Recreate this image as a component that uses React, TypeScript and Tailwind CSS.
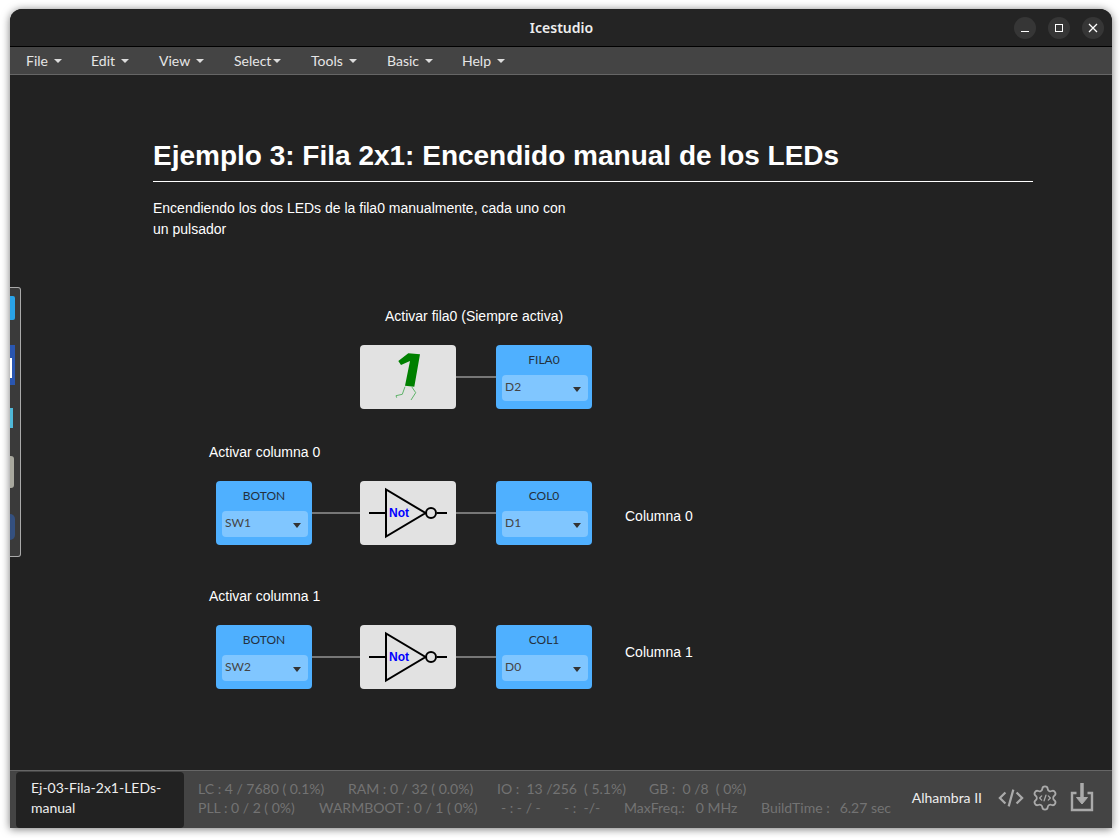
import React from "react";

const menus = [
  { label: "File", w: "w-[65px]", gap: "ml-[6px]" },
  { label: "Edit", w: "w-[68px]", gap: "ml-[6px]" },
  { label: "View", w: "w-[75px]", gap: "ml-[6px]" },
  { label: "Select", w: "w-[77px]", gap: "ml-[2px]" },
  { label: "Tools", w: "w-[76px]", gap: "ml-[6px]" },
  { label: "Basic", w: "w-[75px]", gap: "ml-[6px]" },
  { label: "Help", w: "w-[70px]", gap: "ml-[6px]" },
];

function Caret() {
  return <span className="inline-block h-0 w-0 border-x-[4px] border-t-[4px] border-x-transparent border-t-[#ddd]" />;
}

function PinBlock({ pos, name, pin }: { pos: string; name: string; pin: string }) {
  return (
    <div className={`absolute ${pos} flex h-[64px] w-[96px] flex-col rounded-[4px] bg-[#4fb0ff] pl-[6px] pr-[4px] pt-[6px] font-['Lato',sans-serif]`}>
      <div className="h-[18px] pr-[2px] text-center text-[12px] leading-[18px] text-[#24303d]">{name}</div>
      <div className="mt-[6px] flex h-[26px] items-center justify-between rounded-[4px] bg-[#80c6ff] pl-[3px] pr-[7px] text-[12px] text-[#444]">
        <span className="-mt-[3px]">{pin}</span>
        <span className="mt-[3px] h-0 w-0 border-x-[4px] border-t-[5px] border-x-transparent border-t-[#333]" />
      </div>
    </div>
  );
}

function NotGate({ pos }: { pos: string }) {
  return (
    <div className={`absolute ${pos} h-[64px] w-[96px] rounded-[4px] bg-[#e2e2e2]`}>
      <svg width="96" height="64" viewBox="0 0 96 64">
        <path d="M9 32H26M77 32H87" stroke="#000" strokeWidth="2" fill="none" />
        <path d="M26 8.5V55.5L65.5 32Z" stroke="#000" strokeWidth="2" fill="none" />
        <circle cx="71" cy="32" r="5" stroke="#000" strokeWidth="2" fill="none" />
      </svg>
      <span className="absolute left-[29px] top-[24px] font-['Liberation_Sans',sans-serif] text-[12px] font-bold leading-[16px] text-[#0000ff]">
        Not
      </span>
    </div>
  );
}

function ConstBlock({ pos }: { pos: string }) {
  return (
    <div className={`absolute ${pos} h-[64px] w-[96px] rounded-[4px] bg-[#e2e2e2]`}>
      <svg width="96" height="64" viewBox="0 0 96 64">
        <path d="M48.3 8.3L60 9.3L54.3 41.7L45 40.7L50 16L41 20L38.3 16Z" fill="#008000" />
        <path d="M45 41.7L42.3 49.3L36 50.7L36.7 52.7M51.7 41.7L55.7 47.7L51 55" stroke="#5fb36a" strokeWidth="1" fill="none" />
      </svg>
    </div>
  );
}

function Wire({ pos }: { pos: string }) {
  return <div className={`absolute ${pos} h-[2px] bg-[#777]`} />;
}

function Label({ pos, children }: { pos: string; children: React.ReactNode }) {
  return <div className={`absolute ${pos} text-[14px] leading-[20px] text-white`}>{children}</div>;
}

function GearCode() {
  return (
    <svg width="28" height="28" viewBox="0 0 24 24" fill="none" stroke="#aaa" strokeWidth="1.5" strokeLinejoin="round" strokeLinecap="round">
      <path d="M9.67 4.14a2.34 2.34 0 0 1 4.66 0 2.34 2.34 0 0 0 3.32 1.92 2.34 2.34 0 0 1 2.33 4.03 2.34 2.34 0 0 0 0 3.82 2.34 2.34 0 0 1-2.33 4.03 2.34 2.34 0 0 0-3.32 1.92 2.34 2.34 0 0 1-4.66 0 2.34 2.34 0 0 0-3.32-1.92 2.34 2.34 0 0 1-2.33-4.03 2.34 2.34 0 0 0 0-3.82 2.34 2.34 0 0 1 2.33-4.03 2.34 2.34 0 0 0 3.32-1.92Z" />
      <path d="M9.2 10.2L7.4 12l1.8 1.8M14.8 10.2l1.8 1.8-1.8 1.8M12.8 9.6l-1.6 4.8" strokeWidth="1.1" />
    </svg>
  );
}

export default function App() {
  return (
    <div className="h-[838px] w-[1120px] overflow-hidden bg-white pl-[10px] pt-[9px] font-['Lato',sans-serif]">
      <div className="relative flex h-[819px] w-[1102px] flex-col overflow-hidden rounded-t-[12px] bg-[#222] shadow-[0_1px_8px_rgba(0,0,0,0.55)]">
        {/* title bar */}
        <div className="relative flex h-[38px] shrink-0 items-center justify-center border-b border-black bg-[#242424]">
          <span className="ml-[1px] font-['Noto_Sans',sans-serif] text-[14px] font-semibold text-[#eee]">Icestudio</span>
          <div className="absolute right-[8px] top-[8px] flex gap-[12px]">
            <button className="flex h-[22px] w-[22px] items-center justify-center rounded-full bg-[#363636]">
              <span className="mt-[7px] h-[1px] w-[8px] bg-white" />
            </button>
            <button className="flex h-[22px] w-[22px] items-center justify-center rounded-full bg-[#363636]">
              <span className="h-[8px] w-[8px] border border-white" />
            </button>
            <button className="flex h-[22px] w-[22px] items-center justify-center rounded-full bg-[#363636]">
              <svg width="10" height="10" viewBox="0 0 10 10">
                <path d="M1 1L9 9M9 1L1 9" stroke="#fff" strokeWidth="1.3" />
              </svg>
            </button>
          </div>
        </div>

        {/* menu bar */}
        <div className="flex h-[28px] shrink-0 items-center border-b border-[#666] bg-[#444] pl-[1px] text-[14px] text-[#e6e6e6]">
          {menus.map((m) => (
            <div key={m.label} className={`flex ${m.w} items-center pl-[15px]`}>
              <span>{m.label}</span>
              <span className={`${m.gap} mt-[1px] flex`}>
                <Caret />
              </span>
            </div>
          ))}
        </div>

        {/* canvas */}
        <div className="relative flex-1 font-['Liberation_Sans',sans-serif]">
          <div className="ml-[143px] w-[880px] pt-[63px]">
            <h1 className="border-b border-white pb-[7px] text-[28px] font-bold leading-[36px] text-white">
              Ejemplo 3: Fila 2x1: Encendido manual de los LEDs
            </h1>
            <p className="mt-[16px] w-[430px] text-[14px] leading-[21px] text-white">
              Encendiendo los dos LEDs de la fila0 manualmente, cada uno con un pulsador
            </p>
          </div>

          <Label pos="left-[375px] top-[231px]">Activar fila0 (Siempre activa)</Label>
          <Label pos="left-[199px] top-[367px]">Activar columna 0</Label>
          <Label pos="left-[615px] top-[431px]">Columna 0</Label>
          <Label pos="left-[199px] top-[511px]">Activar columna 1</Label>
          <Label pos="left-[615px] top-[567px]">Columna 1</Label>

          <Wire pos="left-[446px] top-[301px] w-[40px]" />
          <Wire pos="left-[302px] top-[437px] w-[184px]" />
          <Wire pos="left-[302px] top-[581px] w-[184px]" />

          <ConstBlock pos="left-[350px] top-[270px]" />
          <PinBlock pos="left-[486px] top-[270px]" name="FILA0" pin="D2" />
          <PinBlock pos="left-[206px] top-[406px]" name="BOTON" pin="SW1" />
          <NotGate pos="left-[350px] top-[406px]" />
          <PinBlock pos="left-[486px] top-[406px]" name="COL0" pin="D1" />
          <PinBlock pos="left-[206px] top-[550px]" name="BOTON" pin="SW2" />
          <NotGate pos="left-[350px] top-[550px]" />
          <PinBlock pos="left-[486px] top-[550px]" name="COL1" pin="D0" />
        </div>

        {/* footer */}
        <div className="flex h-[58px] shrink-0 items-center border-t border-[#666] bg-[#444] pl-[6px]">
          <div className="h-[56px] w-[168px] rounded-[4px] bg-[#222] pl-[15px] pt-[6px] text-[14px] leading-[20px] text-[#eee]">
            Ej-03-Fila-2x1-LEDs-
            <br />
            manual
          </div>
          <div className="-mt-[3px] ml-[14px] flex flex-col text-[14px] leading-[20px] text-[#737373]">
            <div className="flex h-[19px] whitespace-pre">
              <span className="w-[150px]">LC : 4 / 7680 ( 0.1%)</span>
              <span className="w-[149px]">RAM : 0 / 32 ( 0.0%)</span>
              <span className="w-[152px]">IO :  13 /256  ( 5.1%)</span>
              <span>GB :  0 /8  ( 0%)</span>
            </div>
            <div className="flex whitespace-pre">
              <span className="w-[121px]">PLL : 0 / 2 ( 0%)</span>
              <span className="w-[182px]">WARMBOOT : 0 / 1 ( 0%)</span>
              <span className="w-[63px]">- : - / -</span>
              <span className="w-[60px]">- :  -/-</span>
              <span className="w-[137px]">
                MaxFreq.:<span className="ml-[11px]">0 MHz</span>
              </span>
              <span>
                BuildTime :<span className="ml-[10px]">6.27 sec</span>
              </span>
            </div>
          </div>
          <div className="-mt-[4px] ml-auto flex items-center">
            <span className="text-[14px] text-[#eee]">Alhambra II</span>
            <svg className="ml-[16px]" width="26" height="24" viewBox="0 0 28 24" fill="none" stroke="#aaa" strokeWidth="2.4">
              <path d="M8 6L2 12L8 18M20 6L26 12L20 18M16.5 3L11.5 21" />
            </svg>
            <span className="ml-[7px] flex">
              <GearCode />
            </span>
            <svg className="mb-[2px] ml-[11px] mr-[18px]" width="24" height="30" viewBox="0 0 24 30" fill="none" stroke="#aaa" strokeWidth="2.4">
              <path d="M6.5 11H2V28H22V11H17.5" />
              <path d="M12 1V19" strokeWidth="3.5" />
              <path d="M6.5 15.5L12 22L17.5 15.5Z" fill="#aaa" strokeWidth="1" />
            </svg>
          </div>
        </div>

        {/* dock peeking behind the window */}
        <div className="absolute left-0 top-[278px] h-[270px] w-[11px] overflow-hidden rounded-r-[3px] border border-l-0 border-[#aaa] bg-[#3a3a3a]">
          <div className="absolute left-0 top-[8px] h-[24px] w-[5px] rounded-r-[2px] bg-[#29a3e8]" />
          <div className="absolute left-0 top-[57px] h-[40px] w-[5px] bg-[#2a56b0]" />
          <div className="absolute left-0 top-[70px] h-[20px] w-[2px] bg-white" />
          <div className="absolute left-0 top-[120px] h-[20px] w-[3px] bg-[#4fb8d8]" />
          <div className="absolute left-0 top-[168px] h-[32px] w-[4px] rounded-r-[3px] bg-[#a8a89e]" />
          <div className="absolute left-0 top-[226px] h-[26px] w-[5px] rounded-r-full bg-[#34507f]" />
        </div>
      </div>
    </div>
  );
}
